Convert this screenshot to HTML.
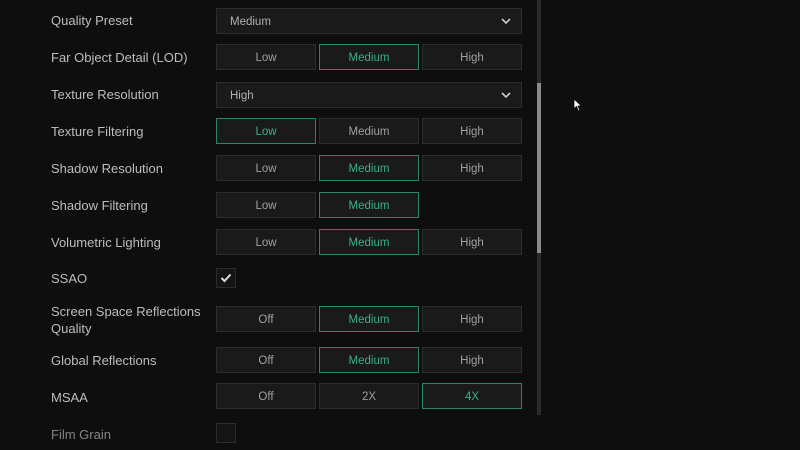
<!DOCTYPE html>
<html><head><style>
body{margin:0;width:800px;height:450px;background:#0e0e0e;position:relative;overflow:hidden;font-family:"Liberation Sans",sans-serif}
.l{position:absolute;left:51px;color:#bdbdbd;font-size:13px;line-height:17px}
.b{position:absolute;width:98px;height:24px;background:#1a1a1a;border:1px solid #2c2c2c;color:#a0a0a0;font-size:11.5px;text-align:center;line-height:26px}
.s{border-color:#2a8566;color:#38b086}
.d{position:absolute;left:216px;height:24px;background:#1a1a1a;border:1px solid #2c2c2c;color:#b0b0b0;font-size:11.5px;line-height:26px;padding-left:13px;width:291px}
.d svg{position:absolute;right:10px;top:9px}
.c{position:absolute;left:216px;width:18px;height:18px;border:1px solid #2c2c2c;background:#151515}
</style></head><body>
<div class="l" style="top:12px">Quality Preset</div>
<div class="d" style="top:8px">Medium<svg width="10" height="7"><path d="M1 1L5 5L9 1" stroke="#ccc" stroke-width="1.6" fill="none"/></svg></div>
<div class="l" style="top:49px">Far Object Detail (LOD)</div>
<div class="b" style="left:216px;top:44px">Low</div><div class="b s" style="left:319px;top:44px">Medium</div><div class="b" style="left:422px;top:44px">High</div>
<div class="l" style="top:86px">Texture Resolution</div>
<div class="d" style="top:82px">High<svg width="10" height="7"><path d="M1 1L5 5L9 1" stroke="#ccc" stroke-width="1.6" fill="none"/></svg></div>
<div class="l" style="top:123px">Texture Filtering</div>
<div class="b s" style="left:216px;top:118px">Low</div><div class="b" style="left:319px;top:118px">Medium</div><div class="b" style="left:422px;top:118px">High</div>
<div class="l" style="top:160px">Shadow Resolution</div>
<div class="b" style="left:216px;top:155px">Low</div><div class="b s" style="left:319px;top:155px">Medium</div><div class="b" style="left:422px;top:155px">High</div>
<div class="l" style="top:197px">Shadow Filtering</div>
<div class="b" style="left:216px;top:192px">Low</div><div class="b s" style="left:319px;top:192px">Medium</div>
<div class="l" style="top:234px">Volumetric Lighting</div>
<div class="b" style="left:216px;top:229px">Low</div><div class="b s" style="left:319px;top:229px">Medium</div><div class="b" style="left:422px;top:229px">High</div>
<div class="l" style="top:270px">SSAO</div>
<div class="c" style="top:268px"><svg width="18" height="18"><path d="M4.5 9L7.5 12L13.5 5.5" stroke="#ddd" stroke-width="2" fill="none"/></svg></div>
<div class="l" style="top:303px">Screen Space Reflections<br>Quality</div>
<div class="b" style="left:216px;top:306px">Off</div><div class="b s" style="left:319px;top:306px">Medium</div><div class="b" style="left:422px;top:306px">High</div>
<div class="l" style="top:352px">Global Reflections</div>
<div class="b" style="left:216px;top:347px">Off</div><div class="b s" style="left:319px;top:347px">Medium</div><div class="b" style="left:422px;top:347px">High</div>
<div class="l" style="top:389px">MSAA</div>
<div class="b" style="left:216px;top:383px">Off</div><div class="b" style="left:319px;top:383px">2X</div><div class="b s" style="left:422px;top:383px">4X</div>
<div class="l" style="top:426px;color:#858585">Film Grain</div>
<div class="c" style="top:423px"></div>
<div style="position:absolute;left:537px;top:0;width:4px;height:415px;background:#2a2a2a"></div>
<div style="position:absolute;left:537px;top:83px;width:4px;height:170px;background:#8a8a8a"></div>
<svg style="position:absolute;left:573px;top:98px" width="10" height="14"><path d="M1 1L1 11L3.5 8.5L5.5 13L7 12.3L5 8L8.5 8Z" fill="#fff" stroke="#000" stroke-width="0.8"/></svg>
</body></html>
